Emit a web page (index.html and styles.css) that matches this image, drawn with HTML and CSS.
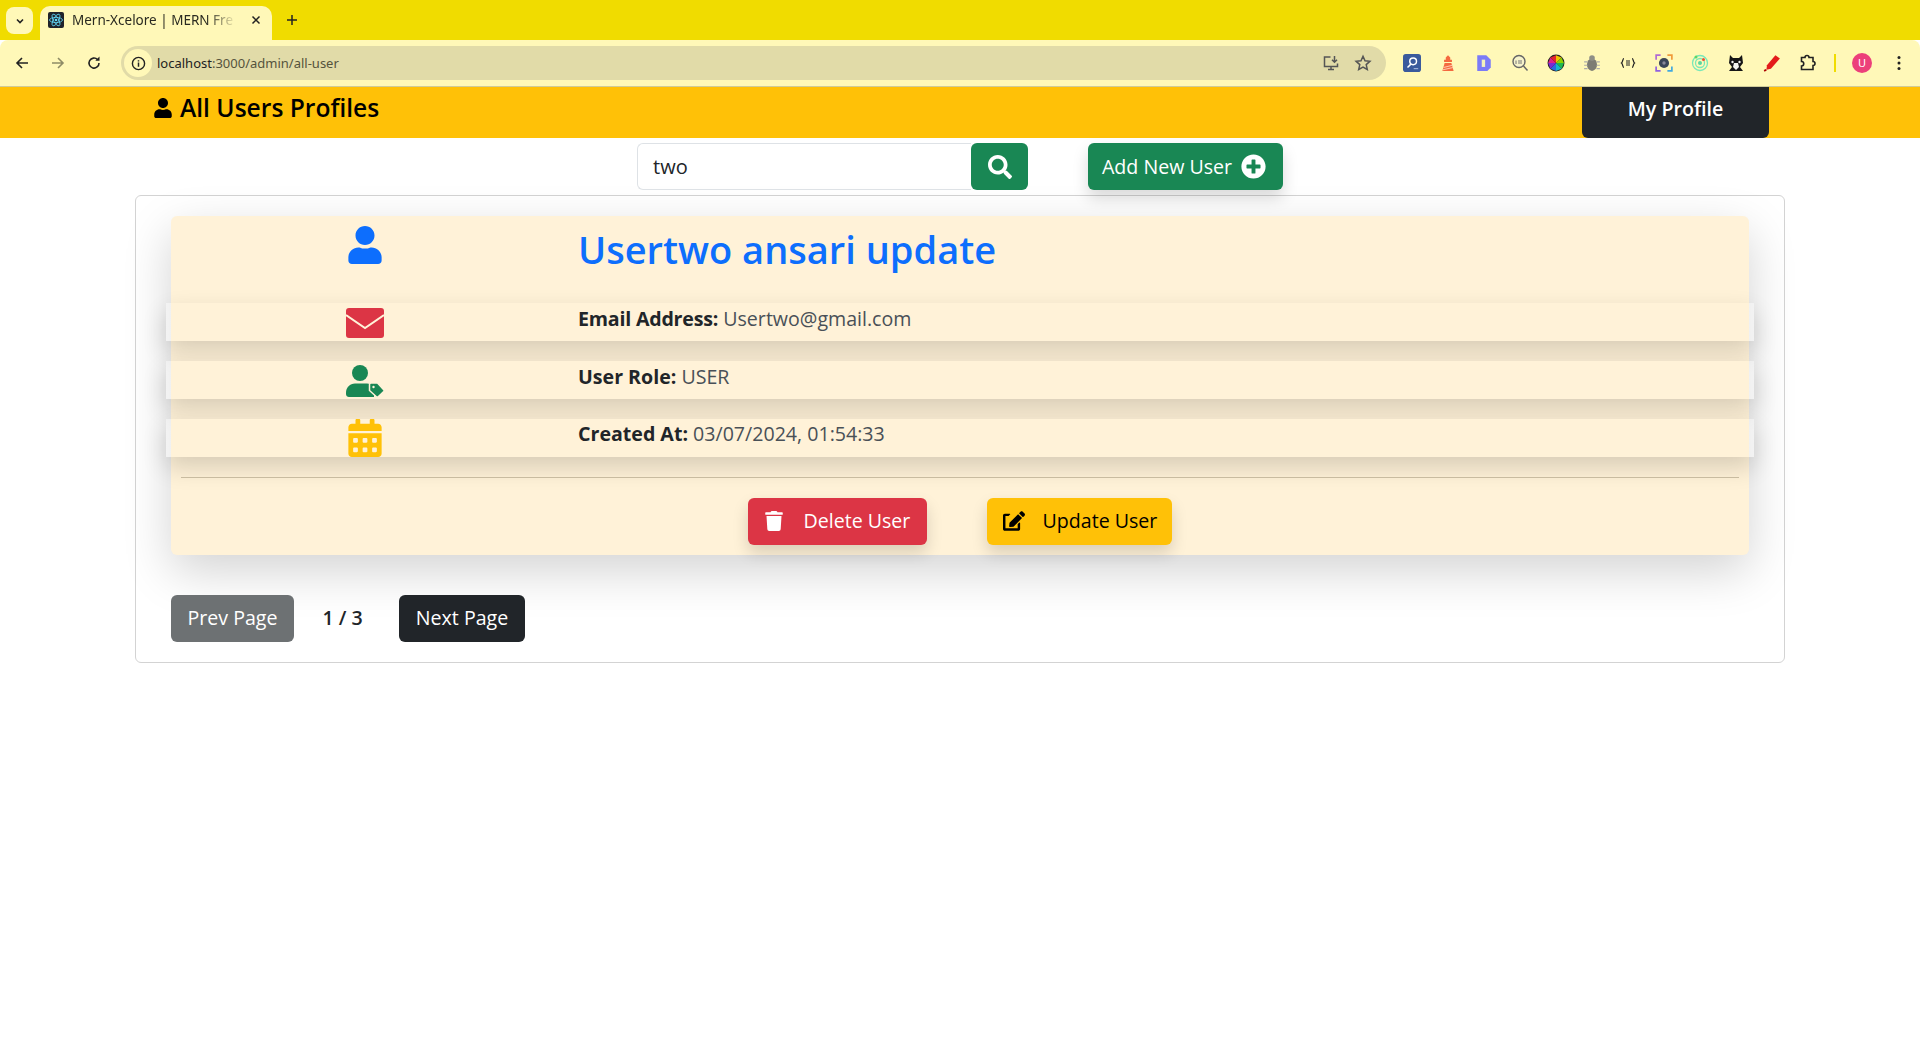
FILE: index.html
```html
<!DOCTYPE html>
<html lang="en">
<head>
<meta charset="utf-8">
<title>Mern-Xcelore | MERN Frontend</title>
<link rel="stylesheet" href="styles.css">
</head>
<body>
<div class="tabstrip">
  <span class="tab-search"><svg viewBox="0 0 12 12" width="12" height="12"><path d="M3 4.5l3 3 3-3" fill="none" stroke="#222" stroke-width="1.6"/></svg></span>
  <div class="tab">
    <svg class="favicon" viewBox="0 0 16 16" width="16" height="16"><rect width="16" height="16" rx="2" fill="#20232a"/><g fill="none" stroke="#61dafb" stroke-width=".8"><ellipse cx="8" cy="8" rx="6.5" ry="2.6"/><ellipse cx="8" cy="8" rx="6.5" ry="2.6" transform="rotate(60 8 8)"/><ellipse cx="8" cy="8" rx="6.5" ry="2.6" transform="rotate(120 8 8)"/></g><circle cx="8" cy="8" r="1.3" fill="#61dafb"/></svg>
    <span class="tab-title">Mern-Xcelore | MERN Fre</span>
    <svg class="tab-close" viewBox="0 0 10 10" width="10" height="10"><path d="M1.5 1.5l7 7M8.5 1.5l-7 7" stroke="#222" stroke-width="1.5"/></svg>
  </div>
  <svg class="new-tab" viewBox="0 0 12 12" width="12" height="12"><path d="M6 1v10M1 6h10" stroke="#222" stroke-width="1.5"/></svg>
</div>
<div class="toolbar">
  <div class="nav-btns">
    <svg viewBox="0 0 16 16" width="16" height="16"><path d="M14 8H3M8 3L3 8l5 5" fill="none" stroke="#222" stroke-width="1.6"/></svg>
    <svg viewBox="0 0 16 16" width="16" height="16"><path d="M2 8h11M8 3l5 5-5 5" fill="none" stroke="#8f8c66" stroke-width="1.6"/></svg>
    <svg viewBox="0 0 16 16" width="16" height="16"><path d="M13 8a5 5 0 1 1-1.5-3.5" fill="none" stroke="#222" stroke-width="1.6"/><path d="M13.5 1.5v4.2H9.3z" fill="#222"/></svg>
  </div>
  <div class="omnibox">
    <span class="site-info"><svg viewBox="0 0 16 16" width="15" height="15"><circle cx="8" cy="8" r="6.5" fill="none" stroke="#222" stroke-width="1.5"/><path d="M8 7v4.5M8 4.4v1.5" stroke="#222" stroke-width="1.6"/></svg></span>
    <span class="url"><span class="url-host">localhost</span>:3000/admin/all-user</span>
    <svg class="omni-icon" viewBox="0 0 18 18" width="18" height="18"><path d="M8.5 3H2.5v9.500h13V9.500M6 15.500h6M9 12.500v3M12.500 2v6M10 5.800l2.500 2.500L15 5.800" fill="none" stroke="#555" stroke-width="1.5"/></svg>
    <svg class="omni-icon" viewBox="0 0 18 18" width="18" height="18"><path d="M9 2.300l2 4.500 4.900.5-3.700 3.300 1.100 4.800L9 13l-4.300 2.400 1.100-4.800-3.700-3.300L7 6.800z" fill="none" stroke="#555" stroke-width="1.5"/></svg>
  </div>
  <div class="extensions">
    <svg class="ext" viewBox="0 0 16 16"><rect width="16" height="16" rx="2.500" fill="#3a5a9c"/><circle cx="9" cy="6.500" r="3" fill="none" stroke="#fff" stroke-width="1.300"/><path d="M7 9l-3 3" stroke="#fff" stroke-width="1.300"/><path d="M9.500 13h4" stroke="#9fb2d8" stroke-width="1"/></svg>
    <svg class="ext" viewBox="0 0 16 16"><path d="M6 3l2-2 2 2v2h1.500v2h-7V5H6zM5 8h6l2 7H3z" fill="#f4693f"/><path d="M4 12l8-2M3.500 14l9-2" stroke="#ffc4a8" stroke-width="1"/></svg>
    <svg class="ext" viewBox="0 0 16 16"><path d="M2 1h8l4 4v7l-3 3H2z" fill="#7b7bf7"/><rect x="6" y="5" width="3" height="6.500" fill="#f3f2bd"/></svg>
    <svg class="ext" viewBox="0 0 18 18"><circle cx="8" cy="7.500" r="6" fill="#f6f3cb" stroke="#666" stroke-width="1.400"/><path d="M12.500 12l4 4.500" stroke="#666" stroke-width="1.500"/><path d="M5 10V6.500M8 6v4M10 6v4" stroke="#777" stroke-width="1"/></svg>
    <svg class="ext" viewBox="0 0 16 16"><circle cx="8" cy="8" r="7.500" fill="#222"/><path d="M8 8V1L12.900 3z" fill="#f2c300"/><path d="M8 8L12.900 3 15 8z" fill="#8bd000"/><path d="M8 8h7l-2 5z" fill="#1fb84c"/><path d="M8 8l5 5-5 2z" fill="#16b8c8"/><path d="M8 8v7l-5-2z" fill="#2a6ae0"/><path d="M8 8l-5 5-2-5z" fill="#7a2bd4"/><path d="M8 8H1l2-5z" fill="#e0208a"/><path d="M8 8L3 3l5-2z" fill="#e3262e"/></svg>
    <svg class="ext" viewBox="0 0 16 16"><ellipse cx="8" cy="9.500" rx="4.500" ry="5.500" fill="#7c7c74"/><circle cx="8" cy="3.500" r="2.500" fill="#8f8f86"/><path d="M1 7h3M12 7h3M1 10h3M12 10h3M1 13h3M12 13h3" stroke="#aaa" stroke-width="1"/></svg>
    <svg class="ext" viewBox="0 0 18 18"><path d="M5 4.500C3.500 4.500 4 8 2.500 9 4 10 3.500 13.500 5 13.500M13 4.500c1.500 0 1 3.500 2.500 4.500-1.500 1-1 4.500-2.500 4.500M7 7h4M7 9h4M7 11h4" fill="none" stroke="#222" stroke-width="1.200"/></svg>
    <svg class="ext" viewBox="0 0 16 16"><path d="M1 5V1h4" fill="none" stroke="#b06ad4" stroke-width="1.500"/><path d="M11 1h4v4" fill="none" stroke="#f09a3a" stroke-width="1.500"/><path d="M1 11v4h4" fill="none" stroke="#9060e0" stroke-width="1.500"/><path d="M11 15h4v-4" fill="none" stroke="#40a8e0" stroke-width="1.500"/><circle cx="8" cy="8" r="4.500" fill="#3b4658"/><circle cx="8" cy="8" r="1.500" fill="#889"/></svg>
    <svg class="ext" viewBox="0 0 18 18"><g fill="none" stroke="#78e8b8" stroke-width="1.300"><circle cx="9" cy="9" r="7.500"/><circle cx="9" cy="9" r="4.500"/></g><circle cx="9" cy="9" r="2" fill="#5cd6a0"/><circle cx="5" cy="3" r="1.500" fill="#5cd66a"/><circle cx="12.500" cy="5.500" r="1.500" fill="#f05030"/></svg>
    <svg class="ext" viewBox="0 0 18 18"><path d="M3 1l3 3h6l3-3 1 8-3 4 3 4H2l3-4-3-4z" fill="#161616"/><path d="M7 9h4l1 4-3 3-3-3z" fill="#f4f4f0"/><circle cx="5.500" cy="8" r="1.200" fill="#f4f4f0"/><circle cx="12.500" cy="8" r="1.200" fill="#f4f4f0"/></svg>
    <svg class="ext" viewBox="0 0 16 16"><path d="M11 1l4 3-8 9-4 1 .5-4z" fill="#e31b1b"/><path d="M1 15l2-1" stroke="#a00" stroke-width="1.500"/></svg>
    <svg class="ext" viewBox="0 0 18 18"><path d="M2.500 3.500h3.500a2 2 0 0 1 4 0h4v4a2 2 0 0 1 0 4v4h-4.500H2.500v-3.500a2.200 2.200 0 0 0 0-4.500z" fill="none" stroke="#222" stroke-width="1.600"/></svg>
    <span class="ext-sep"></span>
    <span class="avatar">U</span>
    <svg class="kebab" viewBox="0 0 4 16" width="4" height="16"><circle cx="2" cy="2.500" r="1.500" fill="#222"/><circle cx="2" cy="8" r="1.500" fill="#222"/><circle cx="2" cy="13.500" r="1.500" fill="#222"/></svg>
  </div>
</div>

<header class="app-header">
  <h1 class="app-title">
    <svg class="title-icon" viewBox="0 0 448 512"><path d="M224 256c70.700 0 128-57.300 128-128S294.700 0 224 0 96 57.300 96 128s57.300 128 128 128zm89.600 32h-16.700c-22.200 10.200-46.900 16-72.900 16s-50.600-5.800-72.900-16h-16.700C60.200 288 0 348.200 0 422.400V464c0 26.500 21.500 48 48 48h352c26.500 0 48-21.500 48-48v-41.600c0-74.200-60.200-134.400-134.400-134.400z"/></svg>
    All Users Profiles
  </h1>
  <button class="btn btn-dark btn-profile">My Profile</button>
</header>

<div class="search-row">
  <div class="search-group">
    <div class="search-input">two</div>
    <button class="btn btn-green search-btn"><svg viewBox="0 0 512 512" width="24" height="24"><path fill="#fff" d="M505 442.700L405.300 343c-4.500-4.500-10.600-7-17-7H372c27.600-35.300 44-79.700 44-128C416 93.100 322.900 0 208 0S0 93.100 0 208s93.100 208 208 208c48.300 0 92.700-16.400 128-44v16.300c0 6.400 2.500 12.500 7 17l99.700 99.700c9.400 9.400 24.600 9.400 33.900 0l28.300-28.300c9.400-9.400 9.400-24.600.1-34zM208 336c-70.700 0-128-57.200-128-128 0-70.700 57.200-128 128-128 70.700 0 128 57.200 128 128 0 70.700-57.200 128-128 128z"/></svg></button>
  </div>
  <button class="btn btn-green add-btn">Add New User <svg viewBox="0 0 512 512" width="25" height="25"><path fill="#fff" d="M256 8C119 8 8 119 8 256s111 248 248 248 248-111 248-248S393 8 256 8zm144 276c0 6.600-5.400 12-12 12h-92v92c0 6.600-5.400 12-12 12h-56c-6.600 0-12-5.400-12-12v-92h-92c-6.600 0-12-5.400-12-12v-56c0-6.600 5.400-12 12-12h92v-92c0-6.600 5.400-12 12-12h56c6.600 0 12 5.400 12 12v92h92c6.600 0 12 5.400 12 12v56z"/></svg></button>
</div>

<main class="panel">
  <article class="user-card">
    <div class="card-head">
      <div class="icon-col">
        <svg class="head-icon" viewBox="0 0 448 512" fill="#0d6efd"><path d="M224 256c70.700 0 128-57.300 128-128S294.700 0 224 0 96 57.300 96 128s57.300 128 128 128zm89.600 32h-16.700c-22.200 10.200-46.900 16-72.900 16s-50.600-5.800-72.900-16h-16.700C60.200 288 0 348.200 0 422.400V464c0 26.500 21.500 48 48 48h352c26.500 0 48-21.500 48-48v-41.600c0-74.200-60.200-134.400-134.400-134.400z"/></svg>
      </div>
      <h2 class="user-name">Usertwo ansari update</h2>
    </div>
    <div class="info-row">
      <div class="icon-col">
        <svg class="row-icon mail" viewBox="0 0 38 30" width="38" height="30"><rect width="38" height="30" rx="3" fill="#dc3545"/><path d="M0 7l19 13L38 7" fill="none" stroke="#fff3d9" stroke-width="2"/></svg>
      </div>
      <p class="info-text"><b>Email Address:</b> Usertwo@gmail.com</p>
    </div>
    <div class="info-row">
      <div class="icon-col">
        <svg class="row-icon" viewBox="0 0 38 32" width="38" height="32"><circle cx="14" cy="8" r="8" fill="#198754"/><path d="M9 18.500h12c4 0 7 3 7 7V32H3c-1.700 0-3-1.300-3-3v-1.500c0-5 4-9 9-9z" fill="#198754"/><path d="M25 18h6.500l6.200 6.700c.5.600.5 1.300 0 1.800l-5.500 5.200c-.5.500-1.300.5-1.800 0L23.500 25.500V19.500c0-.8.600-1.500 1.500-1.500z" fill="#198754" stroke="#fff2d8" stroke-width="1.500"/><circle cx="27.500" cy="22" r="1.200" fill="#fff3d9"/></svg>
      </div>
      <p class="info-text"><b>User Role:</b> USER</p>
    </div>
    <div class="info-row">
      <div class="icon-col">
        <svg class="row-icon cal" viewBox="0 0 448 512" fill="#ffc107"><path d="M0 464c0 26.500 21.500 48 48 48h352c26.500 0 48-21.500 48-48V192H0v272zm320-196c0-6.600 5.400-12 12-12h40c6.600 0 12 5.400 12 12v40c0 6.600-5.400 12-12 12h-40c-6.600 0-12-5.400-12-12v-40zm0 128c0-6.600 5.400-12 12-12h40c6.600 0 12 5.400 12 12v40c0 6.600-5.400 12-12 12h-40c-6.600 0-12-5.400-12-12v-40zM192 268c0-6.600 5.400-12 12-12h40c6.600 0 12 5.400 12 12v40c0 6.600-5.400 12-12 12h-40c-6.600 0-12-5.400-12-12v-40zm0 128c0-6.600 5.400-12 12-12h40c6.600 0 12 5.400 12 12v40c0 6.600-5.400 12-12 12h-40c-6.600 0-12-5.400-12-12v-40zM64 268c0-6.600 5.400-12 12-12h40c6.600 0 12 5.400 12 12v40c0 6.600-5.400 12-12 12H76c-6.600 0-12-5.400-12-12v-40zm0 128c0-6.600 5.400-12 12-12h40c6.600 0 12 5.400 12 12v40c0 6.600-5.400 12-12 12H76c-6.600 0-12-5.400-12-12v-40zM400 64h-48V16c0-8.800-7.200-16-16-16h-32c-8.800 0-16 7.200-16 16v48H160V16c0-8.800-7.200-16-16-16h-32c-8.800 0-16 7.200-16 16v48H48C21.500 64 0 85.500 0 112v48h448v-48c0-26.500-21.500-48-48-48z"/></svg>
      </div>
      <p class="info-text info-text-last"><b>Created At:</b> 03/07/2024, 01:54:33</p>
    </div>
    <hr class="divider">
    <div class="card-actions">
      <button class="btn btn-red action-btn"><svg viewBox="0 0 448 512" width="18" height="20" fill="#fff"><path d="M432 32H312l-9.400-18.700A24 24 0 0 0 281.100 0H166.800a23.720 23.720 0 0 0-21.400 13.300L136 32H16A16 16 0 0 0 0 48v32a16 16 0 0 0 16 16h416a16 16 0 0 0 16-16V48a16 16 0 0 0-16-16zM53.200 467a48 48 0 0 0 47.900 45h245.800a48 48 0 0 0 47.900-45L416 128H32z"/></svg>Delete User</button>
      <button class="btn btn-yellow action-btn"><svg viewBox="0 0 576 512" width="22" height="20" fill="#000"><path d="M402.600 83.200l90.200 90.200c3.800 3.800 3.800 10 0 13.800L274.400 405.600l-92.800 10.300c-12.400 1.400-22.900-9.100-21.500-21.500l10.300-92.800L388.800 83.200c3.800-3.800 10-3.800 13.800 0zm162-22.900l-48.800-48.800c-15.200-15.200-39.900-15.200-55.200 0l-35.400 35.400c-3.800 3.800-3.800 10 0 13.800l90.200 90.200c3.800 3.800 10 3.800 13.800 0l35.400-35.400c15.200-15.300 15.200-40 0-55.200zM384 346.200V448H64V128h73.100c3.200 0 6.200-1.300 8.500-3.500l40-40c7.600-7.600 2.200-20.500-8.500-20.500H48C21.500 64 0 85.500 0 112v352c0 26.500 21.500 48 48 48h352c26.500 0 48-21.500 48-48V306.200c0-10.700-12.900-16-20.500-8.500l-40 40c-2.200 2.300-3.500 5.300-3.500 8.500z"/></svg>Update User</button>
    </div>
  </article>
  <nav class="pager">
    <button class="btn btn-gray">Prev Page</button>
    <span class="page-count">1 / 3</span>
    <button class="btn btn-dark">Next Page</button>
  </nav>
</main>
</body>
</html>
```
FILE: styles.css
```css
* { box-sizing: border-box; }
html, body { margin: 0; padding: 0; }
body { height: 1053px; background: #fff; font-family: "Open Sans", "Noto Sans", sans-serif; color: #212529; overflow: hidden; }

.tabstrip { height: 40px; background: #f0dc00; display: flex; align-items: flex-end; padding-left: 6px; }
.tab-search { width: 27px; height: 27px; margin-bottom: 6px; background: #fff8b8; border-radius: 8px; display: flex; align-items: center; justify-content: center; }
.tab { width: 232px; height: 34px; margin-left: 7px; background: #fff8b8; border-radius: 10px 10px 0 0; display: flex; align-items: center; padding: 0 11px 6px 8px; }
.favicon { flex: none; }
.tab-title { flex: 1; margin-left: 8px; font: 13.5px "Noto Sans", sans-serif; color: #2a2a20; white-space: nowrap; -webkit-mask-image: linear-gradient(90deg, #000 78%, transparent 95%); mask-image: linear-gradient(90deg, #000 78%, transparent 95%); }
.tab-close { flex: none; margin-left: 6px; }
.new-tab { margin: 0 0 14px 14px; }

.toolbar { height: 47px; background: #fff8b8; display: flex; align-items: center; border-radius: 8px 8px 0 0; border-bottom: 1px solid #cfcb9a; padding-left: 14px; }
.nav-btns { display: flex; gap: 20px; width: 107px; }
.omnibox { width: 1265px; height: 34px; border-radius: 17px; background: #e1dba8; display: flex; align-items: center; padding: 0 14px 0 3px; }
.site-info { width: 28px; height: 28px; border-radius: 50%; background: #fff8b8; display: flex; align-items: center; justify-content: center; flex: none; }
.url { flex: 1; margin-left: 5px; font: 13px "Noto Sans", sans-serif; color: #55533c; }
.url-host { color: #222; }
.omni-icon { margin-left: 14px; flex: none; }
.extensions { display: flex; align-items: center; margin-left: 8px; flex: 1; }
.ext { width: 36px; height: 18px; flex: none; }
.ext-sep { width: 2px; height: 18px; margin-left: 8px; background: #f0dc00; }
.avatar { width: 20px; height: 20px; margin-left: 16px; border-radius: 50%; background: #ec407a; color: #fff; font: 11px/20px "Noto Sans", sans-serif; text-align: center; }
.kebab { flex: none; margin-left: 25px; }

.app-header { height: 51px; background: #ffc107; display: flex; justify-content: space-between; padding: 0 151px 0 154px; }
.app-title { margin: 0; font-size: 24.6px; font-weight: 600; color: #000; display: flex; align-items: center; height: 41px; }
.title-icon { width: 18px; height: 20px; margin-right: 8px; fill: #000; }
.btn { border: 0; border-radius: 6px; font: 400 19.6px "Open Sans", sans-serif; height: 47px; padding: 0 16px; display: inline-flex; align-items: center; justify-content: center; white-space: nowrap; }
.btn-profile { width: 187px; height: 51px; padding-bottom: 9px; font-weight: 600; border-radius: 0 0 6px 6px; background: #212529; color: #fff; }
.btn-dark { background: #212529; color: #fff; }
.btn-green { background: #198754; color: #fff; }
.btn-red { background: #dc3545; color: #fff; }
.btn-yellow { background: #ffc107; color: #000; }
.btn-gray { background: #6d7173; color: #fff; }

.search-row { height: 57px; display: flex; padding: 5px 0 0 637px; }
.search-group { display: flex; width: 391px; }
.search-input { width: 334px; height: 47px; border: 1px solid #dee2e6; border-right: 0; border-radius: 6px 0 0 6px; padding: 0 15px; font-size: 20px; line-height: 45px; color: #212529; }
.search-btn { width: 57px; padding: 0; border-radius: 6px; }
.add-btn { margin-left: 60px; width: 195px; gap: 9px; padding: 0 3px 0 0; box-shadow: 0 8px 16px rgba(0,0,0,.15); }

.panel { margin: 0 135px; height: 468px; border: 1px solid #d3d3d3; border-radius: 6px; padding: 20px 35px 0; }
.user-card { background: #fff2d8; border-radius: 6px; height: 339px; box-shadow: 0 16px 48px rgba(0,0,0,.175); }
.card-head { height: 87px; display: flex; }
.icon-col { width: 394px; flex: none; display: flex; justify-content: center; padding-right: 6px; }
.head-icon { width: 34px; height: 38px; margin-top: 10px; }
.user-name { margin: 8px 0 0 13px; font-size: 38px; font-weight: 600; line-height: 50px; color: #0d6efd; white-space: nowrap; }
.info-row { height: 38px; margin: 0 -5px 20px; padding-left: 5px; background: linear-gradient(90deg, rgba(255,255,255,.35) 5px, #fff2d8 5px, #fff2d8 calc(100% - 5px), rgba(255,255,255,.35) calc(100% - 5px)); display: flex; box-shadow: 0 10px 24px rgba(0,0,0,.16); position: relative; }
.row-icon { margin-top: 4px; }
.mail { margin-top: 5px; }
.cal { width: 34px; height: 38px; margin-top: 0; }
.info-text { margin: 0 0 0 13px; font-size: 19.6px; line-height: 32px; color: #495057; white-space: nowrap; }
.info-text-last { line-height: 30px; }
.info-text b { color: #212529; font-weight: 700; }
.card-head + .info-row b { letter-spacing: -.2px; }
.divider { margin: 0 10px; border: 0; border-top: 1px solid #c8bba0; position: relative; }
.card-actions { display: flex; justify-content: center; gap: 60px; margin-top: 20px; padding-right: 1px; position: relative; }
.action-btn { width: 179px; justify-content: flex-start; gap: 21px; padding: 0 0 2px 17px; box-shadow: 0 8px 16px rgba(0,0,0,.15); }
.btn-yellow.action-btn { width: 185px; gap: 18px; padding-left: 16px; }
.pager { display: flex; align-items: center; margin-top: 40px; }
.pager .btn { padding-bottom: 2px; }
.btn-gray { width: 123px; padding: 0; }
.page-count { width: 105px; padding-right: 8px; padding-bottom: 2px; text-align: center; font-size: 19.6px; font-weight: 600; color: #212529; }
.pager .btn-dark { width: 126px; padding-left: 0; padding-right: 0; }
```
